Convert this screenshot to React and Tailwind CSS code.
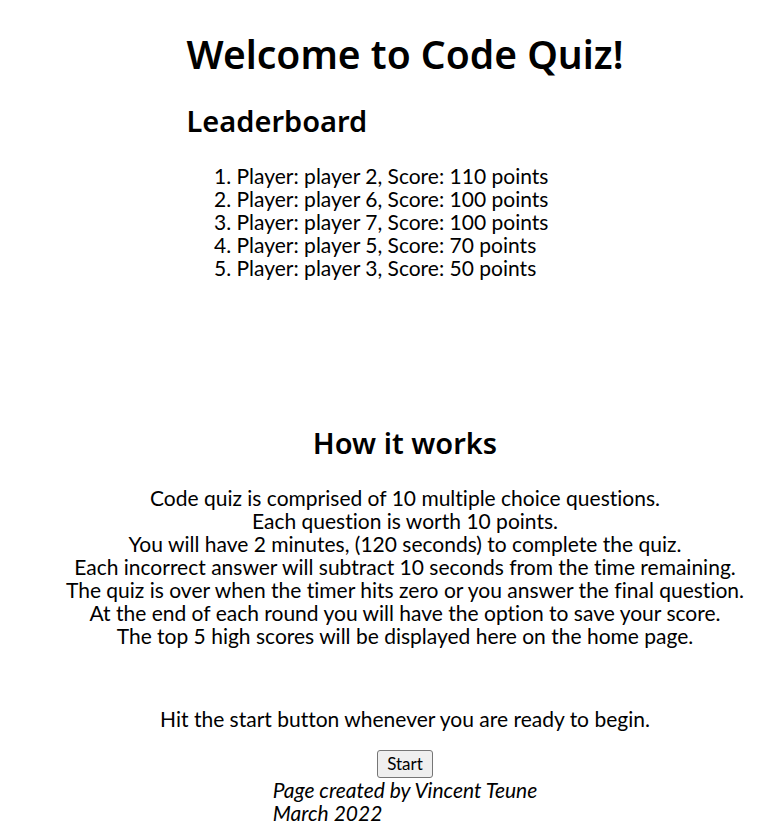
const leaders = [
  { name: 'player 2', score: 110 },
  { name: 'player 6', score: 100 },
  { name: 'player 7', score: 100 },
  { name: 'player 5', score: 70 },
  { name: 'player 3', score: 50 },
];

const rules = [
  'Code quiz is comprised of 10 multiple choice questions.',
  'Each question is worth 10 points.',
  'You will have 2 minutes, (120 seconds) to complete the quiz.',
  'Each incorrect answer will subtract 10 seconds from the time remaining.',
  'The quiz is over when the timer hits zero or you answer the final question.',
  'At the end of each round you will have the option to save your score.',
  'The top 5 high scores will be displayed here on the home page.',
];

export default function App() {
  return (
    <div className="flex flex-col items-center bg-white pt-[31px] pl-[46px] font-['Lato','Noto_Sans',sans-serif] text-[21px] leading-[23px] text-black [font-variant-ligatures:none]">
      <header className="min-h-[370px]">
        <h1 className="font-['Noto_Sans',sans-serif] text-[39px] leading-[46px] font-semibold">Welcome to Code Quiz!</h1>
        <h2 className="mt-[26px] font-['Noto_Sans',sans-serif] text-[29px] leading-[35px] font-semibold">Leaderboard</h2>
        <ol className="mt-[26px] list-decimal pl-[50px]">
          {leaders.map((leader) => (
            <li key={leader.name}>
              Player: {leader.name}, Score: {leader.score} points
            </li>
          ))}
        </ol>
      </header>
      <main className="mt-6 flex flex-col items-center text-center">
        <h2 className="font-['Noto_Sans',sans-serif] text-[29px] leading-[35px] font-semibold">How it works</h2>
        <p className="mt-[26px]">
          {rules.map((rule) => (
            <span key={rule} className="block">{rule}</span>
          ))}
        </p>
        <p className="mt-[60px]">Hit the start button whenever you are ready to begin.</p>
        <button type="button" className="mt-5 h-7 rounded-[3px] border border-[#767676] bg-[#efefef] px-[9px] text-[17px] leading-5">
          Start
        </button>
      </main>
      <footer>
        <address>
          Page created by Vincent Teune
          <br />
          March 2022
        </address>
      </footer>
    </div>
  );
}
